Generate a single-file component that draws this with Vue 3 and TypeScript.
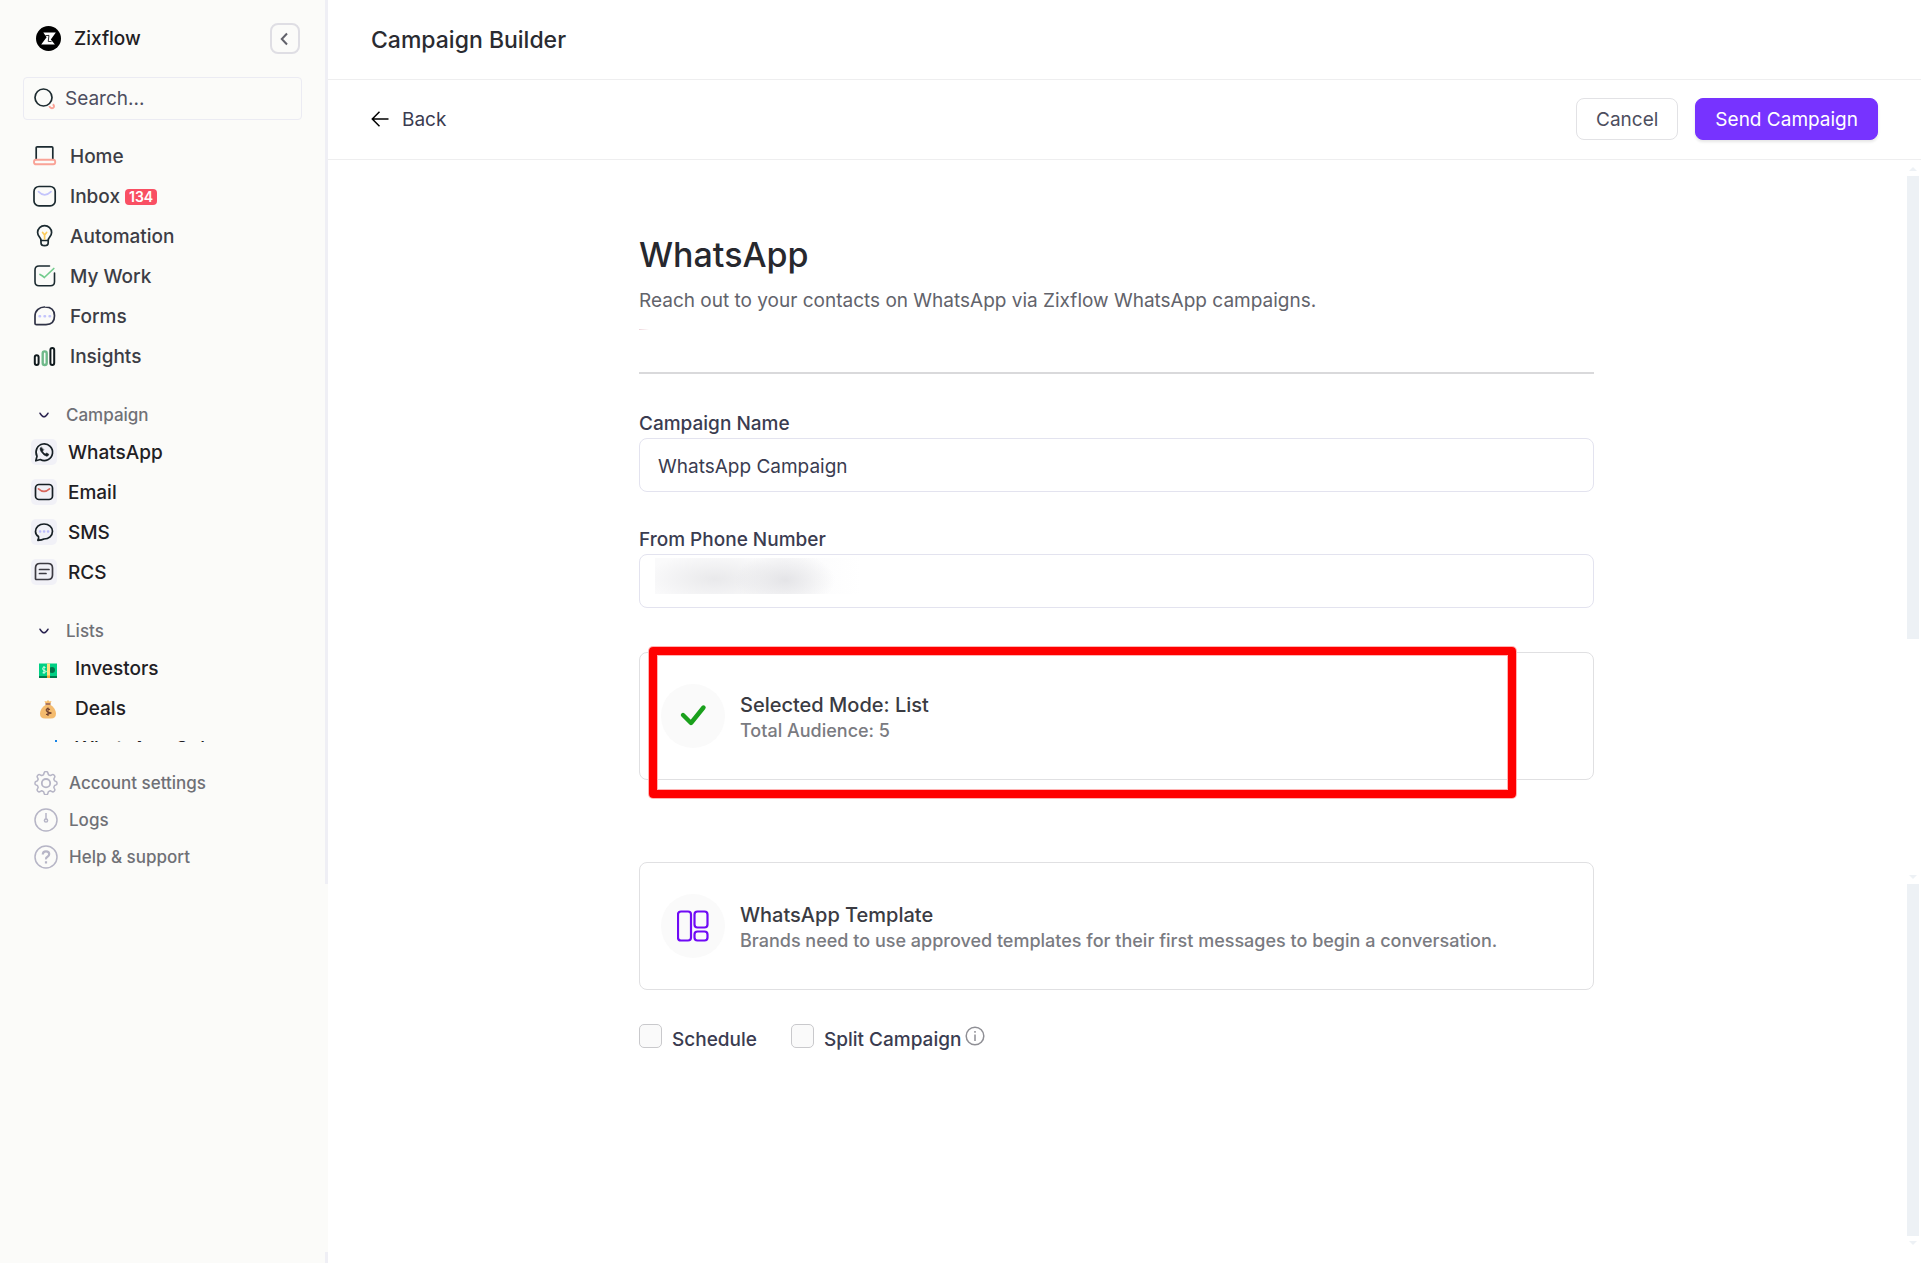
<script setup lang="ts">
import { ref } from 'vue'

interface NavItem {
  id: string
  label: string
  badge?: number
}

const mainNav: NavItem[] = [
  { id: 'home', label: 'Home' },
  { id: 'inbox', label: 'Inbox', badge: 134 },
  { id: 'automation', label: 'Automation' },
  { id: 'work', label: 'My Work' },
  { id: 'forms', label: 'Forms' },
  { id: 'insights', label: 'Insights' },
]
const channels: NavItem[] = [
  { id: 'whatsapp', label: 'WhatsApp' },
  { id: 'email', label: 'Email' },
  { id: 'sms', label: 'SMS' },
  { id: 'rcs', label: 'RCS' },
]
const lists: NavItem[] = [
  { id: 'investors', label: 'Investors' },
  { id: 'deals', label: 'Deals' },
  { id: 'col', label: 'WhatsApp Col' },
]
const support: NavItem[] = [
  { id: 'settings', label: 'Account settings' },
  { id: 'logs', label: 'Logs' },
  { id: 'help', label: 'Help & support' },
]

const query = ref('')
const campaignName = ref('WhatsApp Campaign')
const phone = ref('')
const schedule = ref(false)
const split = ref(false)
</script>

<template>
  <div class="app">
    <aside class="sidebar">
      <div class="panel">
        <div class="brand">
          <svg class="logo" viewBox="0 0 25 25" aria-hidden="true">
            <circle cx="12.500" cy="12.500" r="12.500" fill="#000" />
            <path d="M7.300 6.600H19.800L14.800 13.400L18.900 18.400H5.200L10.600 11.200Z" fill="#fff" />
            <path d="M9.500 9.600L13 9.400L12.200 15.400L15.600 15.600" fill="none" stroke="#000" stroke-width=".8" />
          </svg>
          <span class="brand-name">Zixflow</span>
          <button class="collapse" type="button" aria-label="Collapse sidebar">
            <svg viewBox="0 0 16 16" width="16" height="16" fill="none" stroke="#62626b" stroke-width="2"><path d="M10 2.500L4.800 8L10 13.500" /></svg>
          </button>
        </div>

        <div class="search">
          <svg viewBox="0 0 22 22" width="22" height="22" fill="none" stroke-width="2">
            <circle cx="9.500" cy="9.500" r="8.500" stroke="#1d2b30" stroke-width="1.700" />
            <path d="M15.300 18c.6 1.900 2.400 2.700 3.800 1.900s1.300-2.700-.4-3.500" stroke="#f9a397" stroke-width="1.900" />
          </svg>
          <input v-model="query" type="text" placeholder="Search..." aria-label="Search" />
        </div>

        <nav class="nav">
          <a v-for="item in mainNav" :key="item.id" class="row" href="#">
            <svg class="icon" viewBox="0 0 24 24" fill="none" stroke="#1b2a30" stroke-width="1.700" stroke-linecap="round" stroke-linejoin="round">
              <template v-if="item.id === 'home'">
                <path d="M3.200 15V3.800Q3.200 2.800 4.200 2.800H18.800Q19.800 2.800 19.800 3.800V15" />
                <rect x="1" y="15.700" width="21.200" height="4.600" rx="2" stroke="#f9a397" stroke-width="1.900" />
              </template>
              <template v-else-if="item.id === 'inbox'">
                <rect x="1" y="2.500" width="21.200" height="19.400" rx="5" />
                <path d="M5.500 7.600Q11.600 14 18 7.600" stroke="#c3c4fb" />
              </template>
              <template v-else-if="item.id === 'automation'">
                <path d="M8 16.500C8 13.500 4.600 12.500 4.600 8.600a7 7 0 0 1 14 0c0 3.900-3.400 4.900-3.400 7.900Z" />
                <path d="M8 16.500v2.200q0 3 3.600 3t3.600-3v-2.200" />
                <path d="M9.600 8.500l2 2.500l2-2.500M11.600 11v4" stroke="#fbcb5c" />
              </template>
              <template v-else-if="item.id === 'work'">
                <path d="M16.500 2H6Q2 2 2 6V17.800Q2 21.800 6 21.800H17.500Q21.500 21.800 21.500 17.800V9" stroke-width="1.600" />
                <path d="M7 10.500q3 1.500 4.300 3L20.800 4.500" stroke="#72cb8d" />
              </template>
              <template v-else-if="item.id === 'forms'">
                <path d="M2 19.500V12A9.500 9 0 0 1 12 3q9.500 0 9.500 8.800t-8.500 8.900H3.500Q2 20.700 2 19.500Z" stroke="#2f3246" />
                <path d="M6.600 12.200h.4M11.600 12.200h.4M16.600 12.200h.4" stroke="#c3c4fb" stroke-width="2.600" />
              </template>
              <template v-else>
                <rect x="1.800" y="11.200" width="3.800" height="9.800" rx="1.900" stroke="#101a1e" stroke-width="2" />
                <rect x="9.700" y="7.400" width="4" height="13.600" rx="2" stroke="#6fb98a" stroke-width="2.400" />
                <rect x="17.400" y="4" width="3.800" height="17" rx="1.900" stroke="#101a1e" stroke-width="2" />
              </template>
            </svg>
            <span>{{ item.label }}</span>
            <span v-if="item.badge" class="badge">{{ item.badge }}</span>
          </a>

          <button class="group" type="button">
            <svg viewBox="0 0 12 12" width="12" height="12" fill="none" stroke="#2a2350" stroke-width="1.500" stroke-linecap="round"><path d="M2 4.200q2.500 3.600 4 3.600t4-3.600" /></svg>
            Campaign
          </button>
          <a v-for="item in channels" :key="item.id" class="row channel" href="#">
            <svg class="tile" viewBox="0 0 26 26" fill="none" stroke="#161f24" stroke-width="1.700" stroke-linecap="round" stroke-linejoin="round">
              <template v-if="item.id === 'whatsapp'">
                <path d="M4.800 21.800l1.200-4.600a8.300 8.300 0 1 1 3.300 3.300Z" />
                <path d="M10 8.200q-2 1 .2 4.600t5.400 4.400q1.700.2 2.200-2l-2.300-1.300-1.200 1.200q-2-.8-2.800-3l1-1.200Z" fill="#161f24" stroke-width=".6" />
              </template>
              <template v-else-if="item.id === 'email'">
                <rect x="4.500" y="5.500" width="17" height="15" rx="3.500" />
                <path d="M7.500 9.800q5.500 5 11 0" stroke="#d8685f" />
              </template>
              <template v-else-if="item.id === 'sms'">
                <path d="M7.500 17.600C5.500 16.400 4.500 14.600 4.500 12.500c0-4.200 3.600-7.500 8.500-7.500s8.500 3.100 8.500 7.300c0 4.300-3.600 7.700-8.500 7.700q-2 1-6.200 1.300Q8 19.500 7.500 17.600Z" />
                <path d="M9 12.500h.2M13 12.500h.2M17 12.500h.2" stroke="#bcbcfa" stroke-width="2.400" />
              </template>
              <template v-else>
                <path d="M4.500 20V9Q4.500 4.500 9 4.500H17Q21.500 4.500 21.500 9V16Q21.500 20.500 17 20.500H5Z" stroke="#3c3b42" />
                <path d="M8.500 10.500H18M8.500 14.500H15" stroke="#3c3b42" />
              </template>
            </svg>
            <span>{{ item.label }}</span>
          </a>

          <button class="group" type="button">
            <svg viewBox="0 0 12 12" width="12" height="12" fill="none" stroke="#2a2350" stroke-width="1.500" stroke-linecap="round"><path d="M2 4.200q2.500 3.600 4 3.600t4-3.600" /></svg>
            Lists
          </button>
          <a v-for="item in lists" :key="item.id" class="row list" href="#">
            <svg class="emoji" viewBox="0 0 20 20">
              <template v-if="item.id === 'investors'">
                <rect x="1" y="3.500" width="18" height="12.500" fill="#00d084" />
                <rect x="1" y="16" width="18" height="2" fill="#007a4d" />
                <circle cx="14" cy="10" r="3" fill="#00734a" />
                <path d="M7.500 7.500Q4.500 6.500 4.500 8.500T7.500 11T4.500 12.800M6 6v8" fill="none" stroke="#c8ffe4" />
                <rect x="9" y="3.500" width="3" height="14.500" fill="#ffe082" />
                <rect x="9" y="15.500" width="3" height="2.500" fill="#f2a63b" />
              </template>
              <template v-else-if="item.id === 'deals'">
                <path d="M7.500 3.500L6.500 1L8.500 1.500L10 0L11.500 1.500L13.500 1L12.500 3.500Z" fill="#f7bd6b" />
                <path d="M8 4.500H12C16 7 18 10.500 18 13.500Q18 18.500 13 18.500H7Q2 18.500 2 13.500C2 10.500 4 7 8 4.500Z" fill="#f4bb6e" />
                <path d="M7.500 4H12.500" stroke="#8a4b38" stroke-width="1.400" />
                <path d="M12 9.500Q8.200 8 8.200 10T12 12.500T8 14.500M10 7.500v8.500" fill="none" stroke="#70402f" stroke-width="1.100" />
              </template>
              <rect v-else x="17" y="0" width="2" height="6" fill="#1583e6" />
            </svg>
            <span>{{ item.label }}</span>
          </a>
        </nav>

        <div class="support">
          <a v-for="item in support" :key="item.id" href="#">
            <svg viewBox="0 0 24 24" width="24" height="24" fill="none" stroke="#b6b5c6" stroke-width="1.500" stroke-linejoin="round">
              <template v-if="item.id === 'settings'">
                <path d="M10 2.500a2 2 0 0 1 4 0l.5 1.300 1.800.8 1.300-.6a2 2 0 0 1 2.800 2.800l-.6 1.300.8 1.800 1.100.4a2 2 0 0 1 0 3.800l-1.100.4-.8 1.800.6 1.300a2 2 0 0 1-2.800 2.800l-1.300-.6-1.800.8-.5 1.200a2 2 0 0 1-4 0l-.5-1.200-1.800-.8-1.300.6a2 2 0 0 1-2.800-2.800l.6-1.300-.8-1.800-1.100-.4a2 2 0 0 1 0-3.800l1.100-.4.8-1.800-.6-1.300A2 2 0 0 1 6.400 4l1.300.6 1.800-.8Z" />
                <circle cx="12" cy="12.200" r="4.200" stroke-width="1.800" />
              </template>
              <template v-else-if="item.id === 'logs'">
                <circle cx="12" cy="12" r="11" />
                <circle cx="12" cy="12.500" r="1.600" />
                <path d="M12 5v6" />
              </template>
              <template v-else>
                <circle cx="12" cy="12" r="11" />
                <path d="M8.800 9.500q0-3.200 3.200-3.200t3.200 2.800q0 1.800-1.700 2.700T12 14.300M12 16.200v2.200" stroke-width="2.200" />
              </template>
            </svg>
            {{ item.label }}
          </a>
        </div>
      </div>
      <div class="stub"></div>
    </aside>

    <div class="page">
      <header class="bar"><h2>Campaign Builder</h2></header>
      <div class="bar tools">
        <a class="back" href="#">
          <svg viewBox="0 0 18 18" width="18" height="18" fill="none" stroke="#000" stroke-width="1.500"><path d="M17.500 9H1.500M8.500 1.800L1.300 9L8.500 16.200" /></svg>
          Back
        </a>
        <div class="actions">
          <button class="btn" type="button">Cancel</button>
          <button class="btn primary" type="button">Send Campaign</button>
        </div>
      </div>

      <div class="body">
        <main class="content">
          <h1>WhatsApp</h1>
          <p class="lead">Reach out to your contacts on WhatsApp via Zixflow WhatsApp campaigns.</p>
          <div class="mark"></div>
          <hr />

          <label class="label" for="campaign-name">Campaign Name</label>
          <div class="field">
            <input id="campaign-name" v-model="campaignName" type="text" />
          </div>

          <label class="label" for="phone">From Phone Number</label>
          <div class="field">
            <input id="phone" v-model="phone" type="text" />
            <span class="redacted"></span>
          </div>

          <section class="card">
            <div class="disc">
              <svg viewBox="0 0 32 32" width="32" height="32" fill="none" stroke="#1aa01c" stroke-width="4.400" stroke-linecap="round" stroke-linejoin="round"><path d="M6 15L14 23L26.500 7.500" /></svg>
            </div>
            <div class="card-text">
              <h3>Selected Mode: List</h3>
              <p>Total Audience: 5</p>
            </div>
            <div class="highlight"></div>
          </section>

          <section class="card">
            <div class="disc">
              <svg viewBox="0 0 32 32" width="32" height="32" fill="none" stroke="#6f0af5" stroke-width="2.200">
                <rect x="1" y="1.500" width="13" height="29" rx="3" />
                <rect x="17.500" y="1.500" width="13" height="16" rx="3" />
                <rect x="17.500" y="21.500" width="13" height="9" rx="3" />
              </svg>
            </div>
            <div class="card-text">
              <h3>WhatsApp Template</h3>
              <p>Brands need to use approved templates for their first messages to begin a conversation.</p>
            </div>
          </section>

          <div class="options">
            <label class="check"><input v-model="schedule" type="checkbox" /><span>Schedule</span></label>
            <label class="check">
              <input v-model="split" type="checkbox" /><span>Split Campaign</span>
            </label>
            <svg class="info" viewBox="0 0 20 20" width="20" height="20" fill="none" stroke="#8f8f95" stroke-width="1.500"><circle cx="10" cy="10" r="8.800" /><path d="M10 8.500V15M10 5v1.800" /></svg>
          </div>
        </main>

        <div class="rail" aria-hidden="true">
          <div class="track first"><i class="up"></i><i class="thumb"></i><i class="down"></i></div>
          <div class="track"><i class="thumb"></i><i class="down"></i></div>
        </div>
      </div>
    </div>
  </div>
</template>

<style>
body {
  margin: 0;
  background: #fff;
}
</style>

<style scoped>
* {
  box-sizing: border-box;
}
.app {
  display: flex;
  min-height: 100vh;
  font-family: Inter, "Liberation Sans", sans-serif;
  font-size: 19px;
  color: #3c3d49;
}
h1, h2, h3, p {
  margin: 0;
  font-weight: 400;
}
a {
  color: inherit;
  text-decoration: none;
}
button, input {
  font: inherit;
  color: inherit;
}
svg {
  flex: none;
}

/* Sidebar */
.sidebar {
  flex: 0 0 328px;
  display: flex;
  flex-direction: column;
  justify-content: space-between;
  background: #fbfbf9;
}
.panel {
  display: flex;
  flex-direction: column;
  height: 70vh;
  border-right: 3px solid #efeff5;
  padding: 0 23px 9px;
}
.stub {
  height: 11px;
  border-right: 3px solid #efeff5;
}
.brand {
  flex: none;
  display: flex;
  align-items: center;
  height: 77px;
  padding: 0 2px 0 13px;
}
.logo {
  width: 25px;
  height: 25px;
}
.brand-name {
  margin-left: 13px;
  font-weight: 450;
  color: #1f2024;
}
.collapse {
  display: grid;
  place-items: center;
  width: 30px;
  height: 31px;
  margin-left: auto;
  padding: 0;
  border: 2px solid #dfdee4;
  border-radius: 8px;
  background: transparent;
}
.search {
  flex: none;
  display: flex;
  align-items: center;
  height: 43px;
  padding: 0 10px;
  border: 1px solid #ebebf3;
  border-radius: 4px;
}
.search input {
  width: 100%;
  margin-left: 9px;
  padding: 0;
  border: 0;
  outline: 0;
  background: transparent;
}
.search input::placeholder {
  color: #4d4e60;
}
.nav {
  flex: 1;
  min-height: 0;
  margin-top: 16px;
  overflow: hidden;
}
.row {
  display: flex;
  align-items: center;
  height: 40px;
  padding-left: 10px;
  font-size: 19px;
  font-weight: 450;
  color: #3c3d45;
}
.icon {
  width: 24px;
  height: 24px;
  margin-right: 13px;
}
.badge {
  margin: 2px 0 0 5px;
  padding: 0 4px;
  border-radius: 4px;
  background: #f94f63;
  color: #fff;
  font-size: 14px;
  font-weight: 600;
  line-height: 16px;
}
.group {
  display: flex;
  align-items: center;
  gap: 16px;
  height: 36px;
  margin-top: 20px;
  padding: 1px 0 0 15px;
  border: 0;
  background: none;
  font-size: 17px;
  font-weight: 450;
  color: #6f7076;
}
.channel, .list {
  color: #1f2024;
}
.channel {
  padding-left: 8px;
}
.tile {
  width: 26px;
  height: 26px;
  margin-right: 11px;
  border-radius: 5px;
  background: #f1f1f7;
}
.list {
  padding-left: 15px;
}
.emoji {
  width: 20px;
  height: 20px;
  margin: 3px 17px 0 0;
}
.support {
  flex: none;
  padding-top: 22px;
}
.support a {
  display: flex;
  align-items: center;
  gap: 11px;
  height: 37px;
  padding-left: 11px;
  font-size: 17px;
  font-weight: 450;
  color: #6f7076;
}

/* Page */
.page {
  flex: 1;
  min-width: 0;
  display: flex;
  flex-direction: column;
}
.bar {
  display: flex;
  align-items: center;
  justify-content: space-between;
  height: 80px;
  padding: 0 43px;
  border-bottom: 1px solid #eeeeef;
}
.bar.tools {
  padding-bottom: 1px;
}
.bar h2 {
  font-size: 23px;
  font-weight: 450;
  color: #2a2b31;
}
.back {
  display: flex;
  align-items: center;
  gap: 13px;
  color: #3a3c50;
}
.actions {
  display: flex;
  gap: 17px;
}
.btn {
  height: 42px;
  padding: 0 19px;
  border: 1px solid #e2e2e5;
  border-radius: 8px;
  background: #fff;
  color: #4d4e5e;
}
.btn.primary {
  border-color: #7733ff;
  background: #7733ff;
  color: #fff;
  box-shadow: 0 2px 3px rgba(0, 0, 0, 0.1);
}
.body {
  flex: 1;
  display: flex;
}
.content {
  flex: 0 1 955px;
  margin: 0 auto;
  padding-top: 74px;
}
h1 {
  font-size: 34px;
  font-weight: 450;
  line-height: 42px;
  color: #27282e;
}
.lead {
  margin-top: 12px;
  line-height: 26px;
  color: #62636b;
}
.mark {
  width: 10px;
  height: 1px;
  margin: 15px 0 42px;
  background: linear-gradient(90deg, #ecd3d8, #fff);
}
hr {
  height: 2px;
  margin: 0 0 37px;
  border: 0;
  background: #d9d9db;
}
.label {
  display: block;
  margin-bottom: 1px;
  line-height: 26px;
  font-weight: 450;
  color: #3a3c50;
}
.field {
  position: relative;
  margin-bottom: 35px;
}
.field input {
  display: block;
  width: 100%;
  height: 54px;
  padding: 2px 18px 0;
  border: 1px solid #e3e3ef;
  border-radius: 8px;
  background: #fff;
  color: #3a3c50;
}
.redacted {
  position: absolute;
  left: 16px;
  top: 4px;
  width: 206px;
  height: 36px;
  background:
    radial-gradient(ellipse 50px 28px at 130px 22px, #e4e4e7, transparent),
    radial-gradient(ellipse 70px 26px at 60px 21px, #e9e9eb, transparent),
    linear-gradient(90deg, #fafafb 60%, #fff);
}
.card {
  position: relative;
  display: flex;
  align-items: center;
  height: 128px;
  padding: 0 21px;
  margin-top: 44px;
  border: 1px solid #e0e0e2;
  border-radius: 8px;
}
.card + .card {
  margin-top: 82px;
}
.disc {
  display: grid;
  place-items: center;
  width: 64px;
  height: 64px;
  border-radius: 50%;
  background: #fafafa;
}
.card-text {
  margin-left: 15px;
  padding-top: 4px;
  line-height: 26px;
}
.card-text h3 {
  font-size: 20px;
  font-weight: 500;
  line-height: 26px;
  color: #3a3b42;
}
.card-text p {
  font-size: 18px;
  font-weight: 500;
  color: #7a7b81;
}
.highlight {
  position: absolute;
  top: -6px;
  right: 77px;
  bottom: -19px;
  left: 9px;
  border: 8px solid #f00;
  border-radius: 4px;
  box-shadow: 0 0 0 1px #ffb3b3, inset 0 0 0 1px #ffb3b3;
}
.options {
  display: flex;
  align-items: flex-start;
  margin-top: 34px;
}
.check {
  display: flex;
  gap: 10px;
  margin-right: 34px;
  line-height: 31px;
  font-weight: 450;
  color: #3a3c50;
}
.check input {
  appearance: none;
  width: 23px;
  height: 24px;
  margin: 0;
  border: 1px solid #c9c9cc;
  border-radius: 5px;
  background: #fafafa;
}
.check:nth-child(2) {
  margin-right: 4px;
}
.info {
  margin-top: 2px;
}

/* Scroll rail */
.rail {
  flex: 0 0 16px;
  display: flex;
  flex-direction: column;
}
.track {
  flex: 1;
  display: flex;
  flex-direction: column;
  align-items: center;
  padding-bottom: 18px;
}
.track .thumb {
  flex: 1;
  width: 12px;
  background: #edf1f5;
}
.track.first {
  flex: 0 0 calc(70vh - 160px);
  padding: 7px 0 5px;
}
.track.first .thumb {
  flex: 0 0 65%;
  margin-top: 5px;
}
.up, .down {
  border: 4px solid transparent;
}
.up {
  border-top: 0;
  border-bottom-color: #edf1f5;
}
.down {
  margin-top: 5px;
  border-bottom: 0;
  border-top-color: #edf1f5;
}
.track.first .down {
  margin-top: auto;
}
</style>
